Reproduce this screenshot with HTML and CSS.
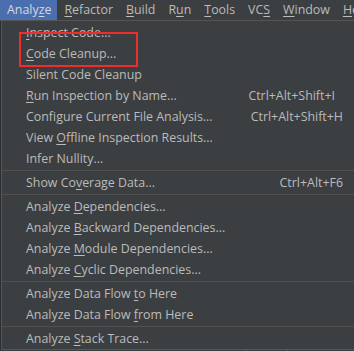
FILE: index.html
```html
<!DOCTYPE html>
<html lang="en">
  <head>
    <meta charset="UTF-8" />
    <meta name="viewport" content="width=device-width, initial-scale=1.0" />
    <title>Analyze Menu</title>
    <link rel="stylesheet" href="styles.css">
  </head>
  <body>
    <div class="menubar">
      <span class="menu active">Analy<u>z</u>e</span>
      <span class="menu"><u>R</u>efactor</span>
      <span class="menu"><u>B</u>uild</span>
      <span class="menu">R<u>u</u>n</span>
      <span class="menu"><u>T</u>ools</span>
      <span class="menu">VC<u>S</u></span>
      <span class="menu"><u>W</u>indow</span>
      <span class="menu"><u>H</u>elp</span>
    </div>

    <div class="popup">
      <div class="item"><span><u>I</u>nspect Code...</span></div>
      <div class="item"><span><u>C</u>ode Cleanup...</span></div>
      <div class="item"><span>Silent Code Cleanup</span></div>
      <div class="item"><span><u>R</u>un Inspection by Name...</span><span class="key key-narrow">Ctrl+Alt+Shift+I</span></div>
      <div class="item"><span>Configure Current File Analysis...</span><span class="key">Ctrl+Alt+Shift+H</span></div>
      <div class="item"><span>View <u>O</u>ffline Inspection Results...</span></div>
      <div class="item"><span>Infer Nullity...</span></div>
      <div class="sep"></div>
      <div class="item"><span>Show Co<u>v</u>erage Data...</span><span class="key">Ctrl+Alt+F6</span></div>
      <div class="sep"></div>
      <div class="item"><span>Analyze <u>D</u>ependencies...</span></div>
      <div class="item"><span>Analyze <u>B</u>ackward Dependencies...</span></div>
      <div class="item"><span>Analyze <u>M</u>odule Dependencies...</span></div>
      <div class="item"><span>Analyze <u>C</u>yclic Dependencies...</span></div>
      <div class="sep"></div>
      <div class="item"><span>Analyze Data Flow <u>t</u>o Here</span></div>
      <div class="item"><span>Analyze Data Flow <u>f</u>rom Here</span></div>
      <div class="sep"></div>
      <div class="item"><span>Analyze <u>S</u>tack Trace...</span></div>
    </div>

    <div class="bottom">
      <div class="cell"></div>
      <div class="cell"></div>
    </div>

    <div class="mark"></div>
  </body>
</html>
```

FILE: styles.css
```css
body {
  margin: 0;
  width: 354px;
  height: 351px;
  overflow: hidden;
  position: relative;
  background: #2b2d30;
  font-family: "Open Sans", "Noto Sans", sans-serif;
  font-size: 12.4px;
  color: #bbbbbb;
}
u {
  text-decoration: underline;
  text-underline-offset: 2px;
}
.menubar {
  display: flex;
  height: 20px;
  background: #3c3f41;
  border-bottom: 1px solid #555555;
  white-space: nowrap;
}
.menu {
  padding: 0 6px 0 7px;
  line-height: 20px;
}
.active {
  background: #4b6eaf;
  color: #d4d8e0;
}
.popup {
  width: 378px;
  margin-left: 1px;
  padding-top: 1px;
  background: #3c3f41;
  border: 1px solid #555555;
  border-top: none;
}
.item {
  display: flex;
  justify-content: space-between;
  align-items: center;
  height: 21px;
  padding: 0 37px 0 24px;
  white-space: nowrap;
}
.key-narrow {
  margin-right: 8px;
}
.sep {
  height: 1px;
  margin: 1px 0;
  background: #515151;
}
.bottom {
  display: flex;
  height: 10px;
  padding-left: 246px;
  background: #3c3f41;
}
.cell {
  width: 40px;
  border-left: 1px solid #555555;
}
.mark {
  position: absolute;
  left: 19px;
  top: 32px;
  width: 115px;
  height: 31px;
  border: 2px solid #f02c2c;
}
```
